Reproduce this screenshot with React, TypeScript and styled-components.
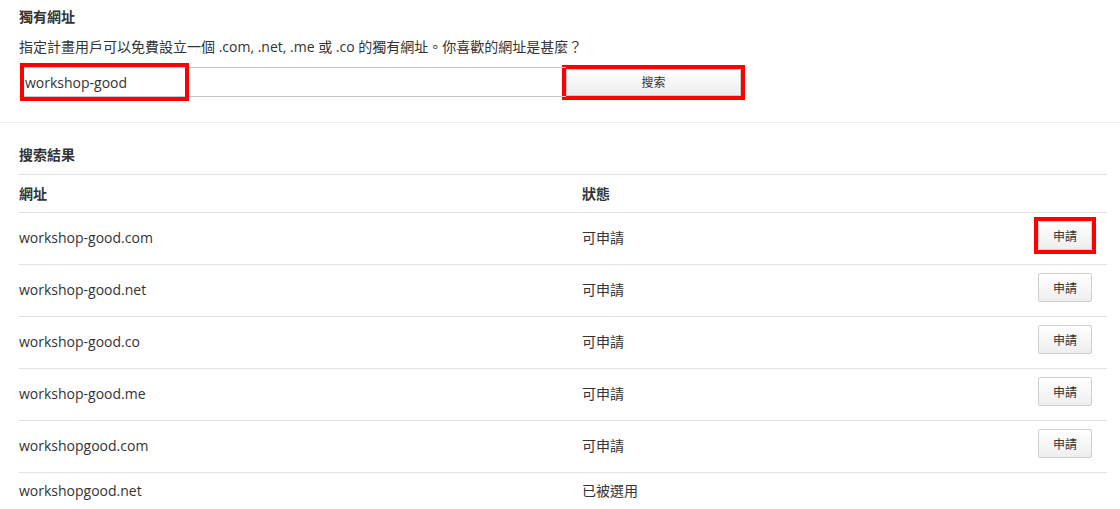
import React from "react";
import styled, { createGlobalStyle } from "styled-components";

const Global = createGlobalStyle`
  html, body { margin: 0; padding: 0; background: #fff; }
  body {
    font-family: "Open Sans", "Noto Sans CJK TC", sans-serif;
    font-size: 14px;
    color: #333;
  }
`;

const Page = styled.div`
  width: 1120px;
  overflow: hidden;
`;

const TopSection = styled.section`
  padding: 7px 13px 25px 19px;
  border-bottom: 1px solid #ececec;
`;

const Title = styled.h3`
  margin: 0;
  font-size: 14px;
  line-height: 20px;
  font-weight: 700;
  color: #333;
`;

const Desc = styled.p`
  margin: 10px 0 0;
  line-height: 20px;
  color: #333;
`;

const SearchRow = styled.div`
  display: flex;
  align-items: center;
  margin-top: 10px;
`;

const InputWrap = styled.div`
  position: relative;
  width: 547px;
  height: 30px;
  box-sizing: border-box;
  border-top: 1px solid #c8c8c8;
  border-bottom: 1px solid #c8c8c8;
  display: flex;
  align-items: center;
  padding-left: 6px;
  font-size: 14px;
  color: #333;
`;

const Highlight = styled.div<{ $l: number; $t: number; $w: number; $h: number }>`
  position: absolute;
  left: ${(p) => p.$l}px;
  top: ${(p) => p.$t}px;
  width: ${(p) => p.$w}px;
  height: ${(p) => p.$h}px;
  box-sizing: border-box;
  border: 4px solid #ff0000;
  pointer-events: none;
`;

const SearchButton = styled.button`
  width: 175px;
  height: 27px;
  box-sizing: border-box;
  border: 1px solid #c8c8c8;
  background: linear-gradient(#ffffff, #ededed);
  font-family: "Open Sans", "Noto Sans CJK TC", sans-serif;
  font-size: 12px;
  color: #333;
  outline: 4px solid #ff0000;
  outline-offset: 0;
  padding: 0;
`;

const Results = styled.section`
  padding: 22px 13px 0 19px;
`;

const ResultsTitle = styled.h3`
  margin: 0;
  font-size: 14px;
  line-height: 20px;
  font-weight: 700;
  padding-bottom: 9px;
  border-bottom: 1px solid #e2e2e2;
`;

const HeadRow = styled.div`
  display: grid;
  grid-template-columns: 563px 1fr;
  align-items: center;
  height: 37px;
  border-bottom: 1px solid #e2e2e2;
  font-weight: 700;
`;

const Row = styled.div`
  display: grid;
  grid-template-columns: 563px 1fr auto;
  align-items: center;
  padding: 8px 15px 10px 0;
  border-bottom: 1px solid #e2e2e2;
`;

const Cell = styled.div`
  font-size: 14px;
  line-height: 20px;
`;

const ActionCell = styled.div`
  padding-bottom: 4px;
  display: flex;
`;

const Marked = styled.span`
  display: block;
  outline: 4px solid #ff0000;
  outline-offset: 0;
`;

const ApplyButton = styled.button`
  display: block;
  width: 54px;
  height: 29px;
  box-sizing: border-box;
  border: 1px solid #cfcfcf;
  border-radius: 2px;
  background: linear-gradient(#ffffff, #eeeeee);
  font-family: "Open Sans", "Noto Sans CJK TC", sans-serif;
  font-size: 12px;
  color: #333;
  padding: 0;
`;

const rows = [
  { url: "workshop-good.com", status: "可申請", apply: true, marked: true },
  { url: "workshop-good.net", status: "可申請", apply: true },
  { url: "workshop-good.co", status: "可申請", apply: true },
  { url: "workshop-good.me", status: "可申請", apply: true },
  { url: "workshopgood.com", status: "可申請", apply: true },
  { url: "workshopgood.net", status: "已被選用", apply: false },
];

export default function App() {
  return (
    <Page>
      <Global />
      <TopSection>
        <Title>獨有網址</Title>
        <Desc>指定計畫用戶可以免費設立一個 .com, .net, .me 或 .co 的獨有網址。你喜歡的網址是甚麼？</Desc>
        <SearchRow>
          <InputWrap>
            workshop-good
            <Highlight $l={1} $t={-5} $w={169} $h={38} />
          </InputWrap>
          <SearchButton>搜索</SearchButton>
        </SearchRow>
      </TopSection>
      <Results>
        <ResultsTitle>搜索結果</ResultsTitle>
        <HeadRow>
          <Cell>網址</Cell>
          <Cell>狀態</Cell>
        </HeadRow>
        {rows.map((r) => (
          <Row key={r.url}>
            <Cell>{r.url}</Cell>
            <Cell>{r.status}</Cell>
            {r.apply ? (
              <ActionCell>
                {r.marked ? (
                  <Marked>
                    <ApplyButton>申請</ApplyButton>
                  </Marked>
                ) : (
                  <ApplyButton>申請</ApplyButton>
                )}
              </ActionCell>
            ) : (
              <span />
            )}
          </Row>
        ))}
      </Results>
    </Page>
  );
}
